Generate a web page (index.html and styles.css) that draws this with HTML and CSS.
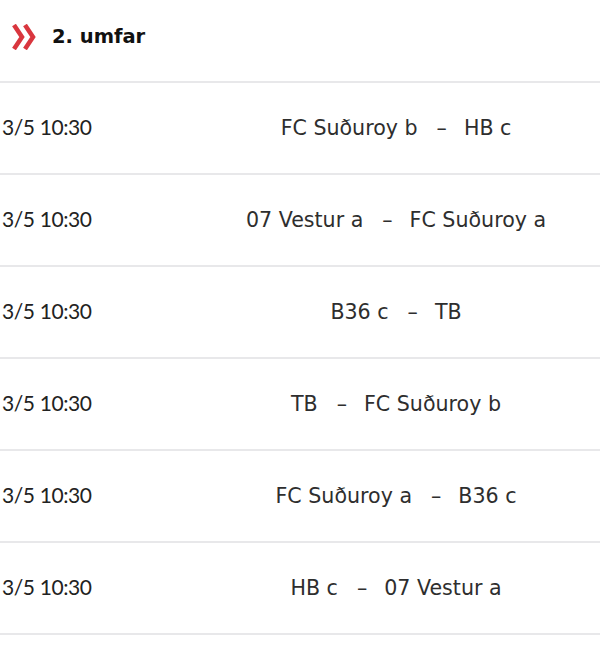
FILE: index.html
```html
<!DOCTYPE html>
<html>
<head>
<meta charset="utf-8">
<link rel="stylesheet" href="styles.css">
</head>
<body>
<div class="round">
  <div class="round-head">
    <svg class="chev" width="25" height="26" viewBox="0 0 25 26">
      <path d="M3 1 L11 13 L3 25" />
      <path d="M14 1 L22 13 L14 25" />
    </svg>
    <h2 class="round-title">2. umfar</h2>
  </div>
  <div class="match">
    <div class="when">3/5 10:30</div>
    <div class="teams"><span>FC Suðuroy b</span><span class="dash">–</span><span>HB c</span></div>
  </div>
  <div class="match">
    <div class="when">3/5 10:30</div>
    <div class="teams"><span>07 Vestur a</span><span class="dash">–</span><span>FC Suðuroy a</span></div>
  </div>
  <div class="match">
    <div class="when">3/5 10:30</div>
    <div class="teams"><span>B36 c</span><span class="dash">–</span><span>TB</span></div>
  </div>
  <div class="match">
    <div class="when">3/5 10:30</div>
    <div class="teams"><span>TB</span><span class="dash">–</span><span>FC Suðuroy b</span></div>
  </div>
  <div class="match">
    <div class="when">3/5 10:30</div>
    <div class="teams"><span>FC Suðuroy a</span><span class="dash">–</span><span>B36 c</span></div>
  </div>
  <div class="match">
    <div class="when">3/5 10:30</div>
    <div class="teams"><span>HB c</span><span class="dash">–</span><span>07 Vestur a</span></div>
  </div>
</div>
</body>
</html>
```
FILE: styles.css
```css
html, body {
  margin: 0;
  padding: 0;
  background: #ffffff;
}
body {
  font-family: "DejaVu Sans", "Lato", sans-serif;
  color: #2a2a2a;
  overflow: hidden;
}
.round-head {
  height: 83px;
  display: flex;
  align-items: center;
  padding: 0 0 9px 11px;
  box-sizing: border-box;
  border-bottom: 2px solid #e8e8ea;
}
.chev {
  display: block;
  fill: none;
  stroke: #d9363e;
  stroke-width: 4.5;
  stroke-linejoin: miter;
  stroke-linecap: butt;
  margin-top: 1px;
}
.round-title {
  margin: 0 0 0 16px;
  font-size: 19.5px;
  font-weight: 700;
  color: #111;
}
.match {
  height: 92px;
  box-sizing: border-box;
  padding-top: 32px;
  display: grid;
  grid-template-columns: 192px 1fr;
  align-items: baseline;
  align-content: start;
  border-bottom: 2px solid #e8e8ea;
  font-size: 20.6px;
  line-height: 1.164;
}
.when {
  padding-left: 2px;
  font-family: "Lato", sans-serif;
  font-size: 21px;
  letter-spacing: -0.4px;
  color: #222;
}
.teams {
  display: flex;
  justify-content: center;
  align-items: baseline;
  color: #2e2e2e;
}
.dash {
  margin: 0 17px 0 19px;
}
```
